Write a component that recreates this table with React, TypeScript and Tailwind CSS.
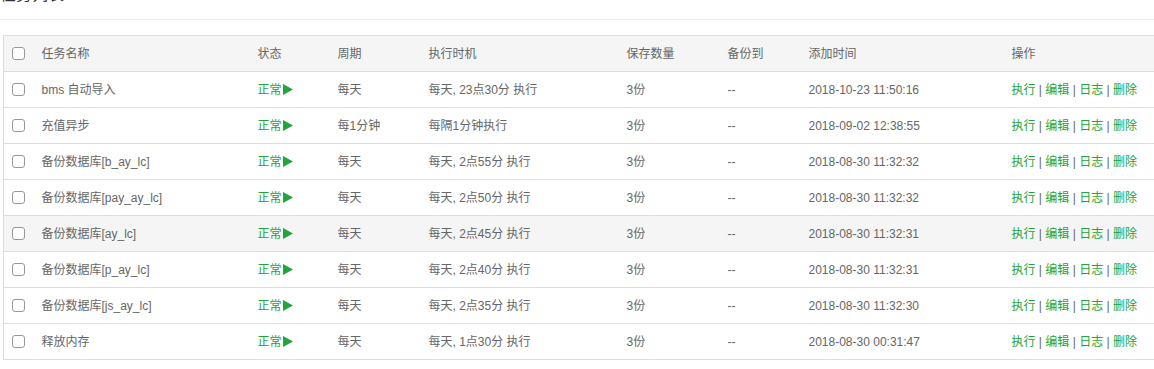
import React from "react";

const rows = [
  ["bms 自动导入", "每天", "每天, 23点30分 执行", "2018-10-23 11:50:16"],
  ["充值异步", "每1分钟", "每隔1分钟执行", "2018-09-02 12:38:55"],
  ["备份数据库[b_ay_lc]", "每天", "每天, 2点55分 执行", "2018-08-30 11:32:32"],
  ["备份数据库[pay_ay_lc]", "每天", "每天, 2点50分 执行", "2018-08-30 11:32:32"],
  ["备份数据库[ay_lc]", "每天", "每天, 2点45分 执行", "2018-08-30 11:32:31"],
  ["备份数据库[p_ay_lc]", "每天", "每天, 2点40分 执行", "2018-08-30 11:32:31"],
  ["备份数据库[js_ay_lc]", "每天", "每天, 2点35分 执行", "2018-08-30 11:32:30"],
  ["释放内存", "每天", "每天, 1点30分 执行", "2018-08-30 00:31:47"],
];

function Box() {
  return <span className="block w-[13px] h-[13px] border border-[#999] rounded-[3px] bg-white" />;
}

export default function App() {
  const font = { fontFamily: '"Liberation Sans", "Noto Sans CJK SC", sans-serif' };
  return (
    <div className="w-[1154px] h-[369px] bg-white overflow-hidden text-[12px] text-[#666]" style={font}>
      <div className="h-[20px] border-b border-[#eee] overflow-hidden">
        <div className="-mt-[13px] text-[16px] leading-[16px] text-[#333]">任务列表</div>
      </div>
      <div className="pt-[15px] pl-[3px]">
        <table className="table-fixed border-collapse w-[1160px]">
          <colgroup>
            <col className="w-[30px]" />
            <col className="w-[216px]" />
            <col className="w-[80px]" />
            <col className="w-[91px]" />
            <col className="w-[198px]" />
            <col className="w-[101px]" />
            <col className="w-[81px]" />
            <col className="w-[203px]" />
            <col className="w-[160px]" />
          </colgroup>
          <thead>
            <tr className="bg-[#f5f5f5] h-[36px]">
              <th className="border-l border-y border-[#ddd] pl-[8px] font-normal text-left"><Box /></th>
              {["任务名称", "状态", "周期", "执行时机", "保存数量", "备份到", "添加时间"].map((h) => (
                <th key={h} className="border-y border-[#ddd] pl-[8px] font-normal text-left">{h}</th>
              ))}
              <th colSpan={2} className="border-y border-r border-[#ddd] pl-[8px] font-normal text-left">操作</th>
            </tr>
          </thead>
          <tbody>
            {rows.map((r, i) => (
              <tr key={i} className={`h-[36px] ${i === 4 ? "bg-[#f5f5f5]" : "bg-white"}`}>
                <td className="border-l border-b border-[#ddd] pl-[8px]"><Box /></td>
                <td className="border-b border-[#ddd] pl-[8px]">{r[0]}</td>
                <td className="border-b border-[#ddd] pl-[8px]">
                  <span className="inline-flex items-center text-[#20a53a]">
                    正常
                    <svg width="10" height="11" viewBox="0 0 10 11" className="ml-[1px]">
                      <polygon points="0,0 10,5.5 0,11" fill="#20a53a" />
                    </svg>
                  </span>
                </td>
                <td className="border-b border-[#ddd] pl-[8px]">{r[1]}</td>
                <td className="border-b border-[#ddd] pl-[8px]">{r[2]}</td>
                <td className="border-b border-[#ddd] pl-[8px]">3份</td>
                <td className="border-b border-[#ddd] pl-[8px]">--</td>
                <td className="border-b border-[#ddd] pl-[8px]">{r[3]}</td>
                <td className="border-b border-r border-[#ddd] pl-[8px] whitespace-nowrap" colSpan={2}>
                  <span className="text-[#20a53a]">执行</span> | <span className="text-[#20a53a]">编辑</span> |{" "}
                  <span className="text-[#20a53a]">日志</span> | <span className="text-[#20a53a]">删除</span>
                </td>
              </tr>
            ))}
          </tbody>
        </table>
      </div>
    </div>
  );
}
